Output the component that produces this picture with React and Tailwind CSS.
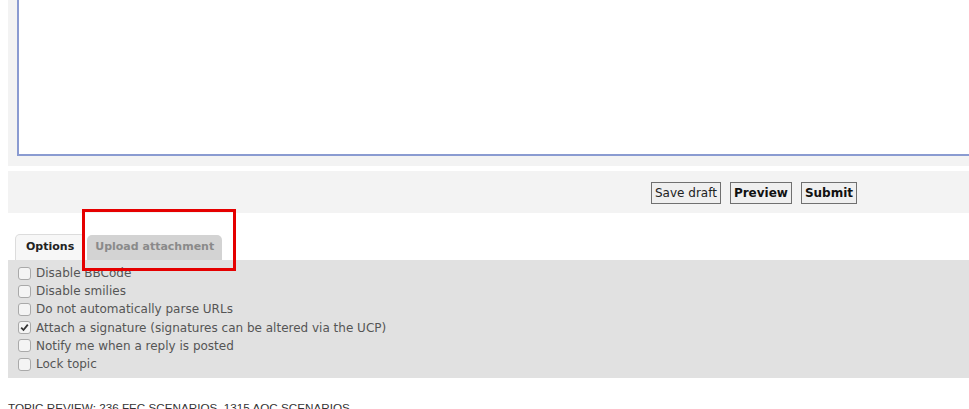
import React from "react";

const rows = [
  { label: "Disable BBCode", checked: false },
  { label: "Disable smilies", checked: false },
  { label: "Do not automatically parse URLs", checked: false },
  { label: "Attach a signature (signatures can be altered via the UCP)", checked: true },
  { label: "Notify me when a reply is posted", checked: false },
  { label: "Lock topic", checked: false },
];

function Box({ checked }) {
  return (
    <span className="flex h-[13px] w-[13px] shrink-0 items-center justify-center rounded-[3px] border border-[#a9a9a9] bg-[#f4f4f4]">
      {checked && (
        <svg width="9" height="9" viewBox="0 0 9 9">
          <path d="M1.2 4.6 L3.5 7 L7.8 1.6" fill="none" stroke="#333" strokeWidth="1.8" />
        </svg>
      )}
    </span>
  );
}

export default function App() {
  return (
    <div className="relative h-[409px] w-[969px] overflow-hidden bg-white" style={{ fontFamily: '"DejaVu Sans", Verdana, sans-serif' }}>
      <div className="ml-2 w-[1000px]">
        {/* editor panel */}
        <div className="h-[166px] bg-[#f3f3f3] pl-[9px]">
          <div className="h-[156px] w-[990px] border-b-2 border-l-2 border-[#8a9bd1] bg-white" />
        </div>
        {/* buttons */}
        <div className="mt-[5px] flex h-[42px] items-center bg-[#f3f3f3] pl-[643px] pt-[2px]">
          <div className="flex gap-[9px]">
            <button className="h-[22px] border border-[#707070] bg-[#efefef] px-[3px] text-[12px] leading-none text-[#222]">Save draft</button>
            <button className="h-[22px] border border-[#707070] bg-[#efefef] px-[3px] text-[12px] font-bold leading-none text-[#111]">Preview</button>
            <button className="h-[22px] border border-[#707070] bg-[#efefef] px-[3px] text-[12px] font-bold leading-none text-[#111]">Submit</button>
          </div>
        </div>
        {/* tabs */}
        <div className="mt-[21px] flex items-end gap-[2px] pl-[7px]">
          <div className="flex h-[26px] items-center rounded-t-[5px] border border-b-0 border-[#dcdcdc] bg-[#f7f7f7] px-[10px] text-[11px] font-bold text-[#222]">Options</div>
          <div className="flex h-[25px] items-center rounded-t-[5px] bg-[#d3d3d3] px-[8px] text-[11px] font-bold text-[#8a8a8a]">Upload attachment</div>
        </div>
        <div className="flex h-[118px] flex-col bg-[#e1e1e1] pl-[10px] pt-[4px]">
          {rows.map((r) => (
            <div key={r.label} className="flex h-[18.2px] items-center gap-[5px] text-[12px] text-[#555]">
              <Box checked={r.checked} />
              <span className="whitespace-nowrap">{r.label}</span>
            </div>
          ))}
        </div>
        <div className="mt-[24px] text-[11.7px] leading-none text-[#333]" style={{ fontFamily: '"Liberation Sans", Arial, sans-serif' }}>
          TOPIC REVIEW: 236 FEC SCENARIOS, 1315 AOC SCENARIOS
        </div>
      </div>
      {/* annotation */}
      <div className="pointer-events-none absolute left-[82px] top-[209px] h-[62px] w-[154px] border-[3px] border-[#e50000]" />
    </div>
  );
}
